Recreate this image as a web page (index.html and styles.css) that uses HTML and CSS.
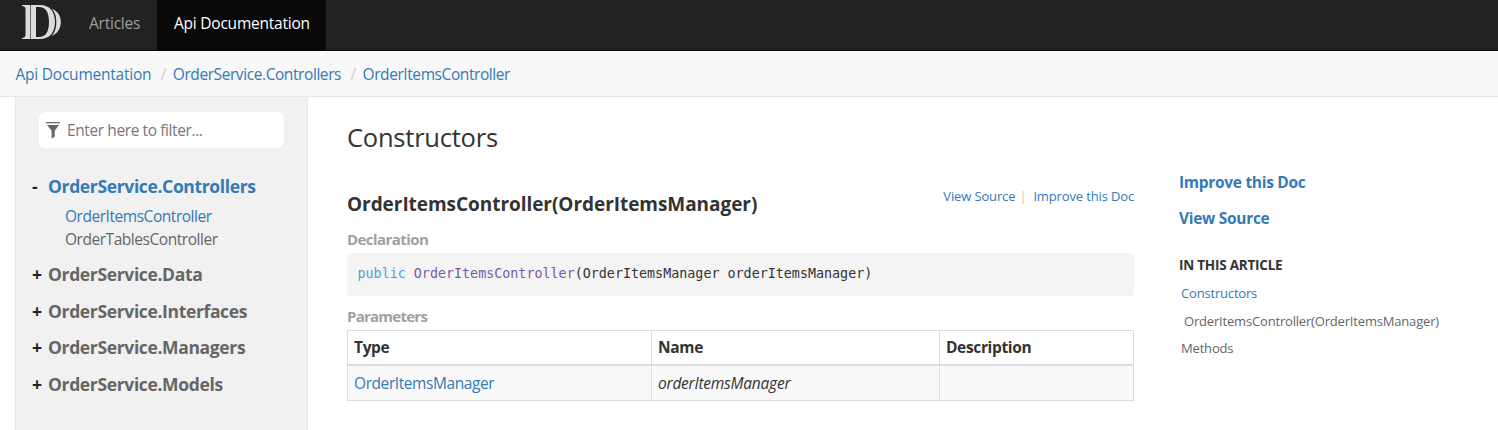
FILE: index.html
```
<!DOCTYPE html>
<html lang="en">
<head>
<meta charset="utf-8">
<title>OrderItemsController</title>
<link rel="stylesheet" href="styles.css">
</head>
<body>
<header class="navbar">
  <a class="brand" href="#" aria-label="Home">
    <svg class="logo" width="40" height="35" viewBox="0 0 40 35" fill="#dcdcdc">
      <path d="M0 0h8v34H0v-1q3.500-.4 3.500-3V4Q3.500 1.300 0 1z"/>
      <path fill-rule="evenodd" d="M8.600 0H18c9.500 0 15 6.500 15 17S27.500 34 18 34H8.600zM14 2v30H17c6.500 0 10-5 10-15S23.500 2 17 2z"/>
      <path d="M29.500 3.500C35.500 6 38.800 10.500 38.800 17S35.500 28.500 29.500 31C33 27.500 34.300 23 34.300 17S33 7 29.500 3.500z"/>
    </svg>
  </a>
  <a class="tab" href="#">Articles</a>
  <a class="tab tab-active" href="#">Api Documentation</a>
</header>
<nav class="breadcrumb">
  <a href="#">Api Documentation</a><span class="slash">/</span><a class="tight" href="#">OrderService.Controllers</a><span class="slash">/</span><a class="tight" href="#">OrderItemsController</a>
</nav>
<div class="layout">
  <aside class="sidebar">
    <div class="filter">
      <svg width="14" height="17" viewBox="0 0 14 17" fill="#666"><path d="M0 0h14v1.300H0zM1 3h12L8.700 8.700v6L5.600 16.500V8.700z"/></svg>
      <span class="placeholder">Enter here to filter...</span>
    </div>
    <ul class="toc">
      <li class="open"><div class="group"><span class="sign">-</span><a class="active" href="#">OrderService.Controllers</a></div>
        <ul class="children">
          <li><a class="active" href="#">OrderItemsController</a></li>
          <li><a href="#">OrderTablesController</a></li>
        </ul>
      </li>
      <li><div class="group"><span class="sign">+</span><a href="#">OrderService.Data</a></div></li>
      <li><div class="group"><span class="sign">+</span><a href="#">OrderService.Interfaces</a></div></li>
      <li><div class="group"><span class="sign">+</span><a href="#">OrderService.Managers</a></div></li>
      <li><div class="group"><span class="sign">+</span><a href="#">OrderService.Models</a></div></li>
    </ul>
  </aside>
  <main class="article">
    <h3 class="section-title">Constructors</h3>
    <div class="member">
      <h4 class="member-name">OrderItemsController(OrderItemsManager)</h4>
      <div class="links"><a href="#">View Source</a><span class="bar">|</span><a href="#">Improve this Doc</a></div>
    </div>
    <h5 class="label">Declaration</h5>
    <pre class="code"><span class="kw">public</span> <span class="title">OrderItemsController</span>(OrderItemsManager orderItemsManager)</pre>
    <h5 class="label label-params">Parameters</h5>
    <table class="params">
      <thead><tr><th class="c-type">Type</th><th class="c-name">Name</th><th>Description</th></tr></thead>
      <tbody><tr><td><a class="tight" href="#">OrderItemsManager</a></td><td><em>orderItemsManager</em></td><td></td></tr></tbody>
    </table>
  </main>
  <aside class="affix">
    <a class="action" href="#">Improve this Doc</a>
    <a class="action" href="#">View Source</a>
    <h5 class="affix-title">IN THIS ARTICLE</h5>
    <a class="item active" href="#">Constructors</a>
    <a class="item sub" href="#">OrderItemsController(OrderItemsManager)</a>
    <a class="item" href="#">Methods</a>
  </aside>
</div>
</body>
</html>
```
FILE: styles.css
```
* { box-sizing: border-box; }
body {
  margin: 0;
  height: 430px;
  overflow: hidden;
  background: #fff;
  color: #333;
  font: 15.5px/22px "Open Sans", "Noto Sans", sans-serif;
  letter-spacing: -0.23px;
  white-space: nowrap;
}
a { color: #337ab7; text-decoration: none; }
ul { list-style: none; margin: 0; padding: 0; }
h3, h4, h5 { margin: 0; }
.tight { letter-spacing: -0.42px; }

.navbar { display: flex; height: 51px; background: #222; border-bottom: 1px solid #080808; }
.brand { width: 72px; padding: 5px 0 0 22px; }
.logo { display: block; }
.tab { width: 85px; padding: 11.500px 0 0 17px; color: #9d9d9d; }
.tab-active { width: 169px; background: #080808; color: #fff; }

.breadcrumb { display: flex; height: 46px; padding: 12px 0 0 15.500px; background: #f8f8f8; border-bottom: 1px solid #e7e7e7; }
.slash { width: 21.500px; padding-left: 9.500px; color: #ccc; }

.layout { display: flex; height: 333px; }
.sidebar { width: 293px; margin-left: 15px; padding: 15px 0 0 16px; background: #f1f1f1; border: solid #e7e7e7; border-width: 0 1px; }
.filter { display: flex; align-items: center; gap: 7px; width: 245px; height: 36px; margin-left: 7px; padding-left: 7px; border-radius: 6px; background: #fff; }
.placeholder { color: #777; letter-spacing: -0.4px; }
.toc { margin-top: 23px; }
.toc a { color: #666; }
.toc a.active { color: #337ab7; }
.group { display: flex; height: 30px; margin-bottom: 6.700px; font-size: 17.500px; font-weight: 700; line-height: 30px; letter-spacing: -0.36px; }
.sign { width: 16px; color: #222; }
.open .group { margin-bottom: 4px; }
.children { margin: 0 0 8px 33px; line-height: 23px; letter-spacing: -0.46px; }

.article { width: 787px; margin-left: 39px; padding-top: 23px; }
.section-title { font-size: 25.500px; font-weight: 400; line-height: 34px; }
.member { display: flex; justify-content: space-between; margin-top: 35px; height: 39px; }
.member-name { font-size: 19px; line-height: 30px; letter-spacing: -0.05px; }
.links { display: flex; margin-top: -2px; font-size: 13px; line-height: 18px; letter-spacing: -0.14px; }
.bar { width: 18px; padding-left: 4px; color: #ccc; }
.label { font-size: 15px; line-height: 22px; letter-spacing: -0.55px; color: #a0a0a0; }
.code { height: 43px; margin: 3px 0 0; padding: 11px 10.500px; border-radius: 4px; background: #f4f4f4; font: 13.360px/19px "DejaVu Sans Mono", monospace; letter-spacing: 0; }
.kw { color: #569cd6; }
.title { color: #7b5aa6; }
.label-params { margin-top: 9px; letter-spacing: -0.75px; }
.params { width: 787px; margin-top: 3px; border-collapse: collapse; table-layout: fixed; }
.params th, .params td { padding: 0 6px; border: 1px solid #ddd; text-align: left; }
.params th { height: 34px; border-bottom-width: 2px; letter-spacing: -0.35px; }
.params td { height: 36px; background: #f9f9f9; }
.c-type { width: 304px; }
.c-name { width: 288px; }

.affix { display: flex; flex-direction: column; margin-left: 45px; padding-top: 74px; }
.action { height: 36px; font-weight: 700; letter-spacing: -0.3px; }
.affix-title { margin-top: 11px; font-size: 13.500px; line-height: 22px; }
.item { height: 27.600px; margin: 6px 0 -6px 2px; font-size: 13px; letter-spacing: -0.18px; color: #666; }
.item.active { color: #337ab7; }
.item.sub { margin-left: 5px; }
```
